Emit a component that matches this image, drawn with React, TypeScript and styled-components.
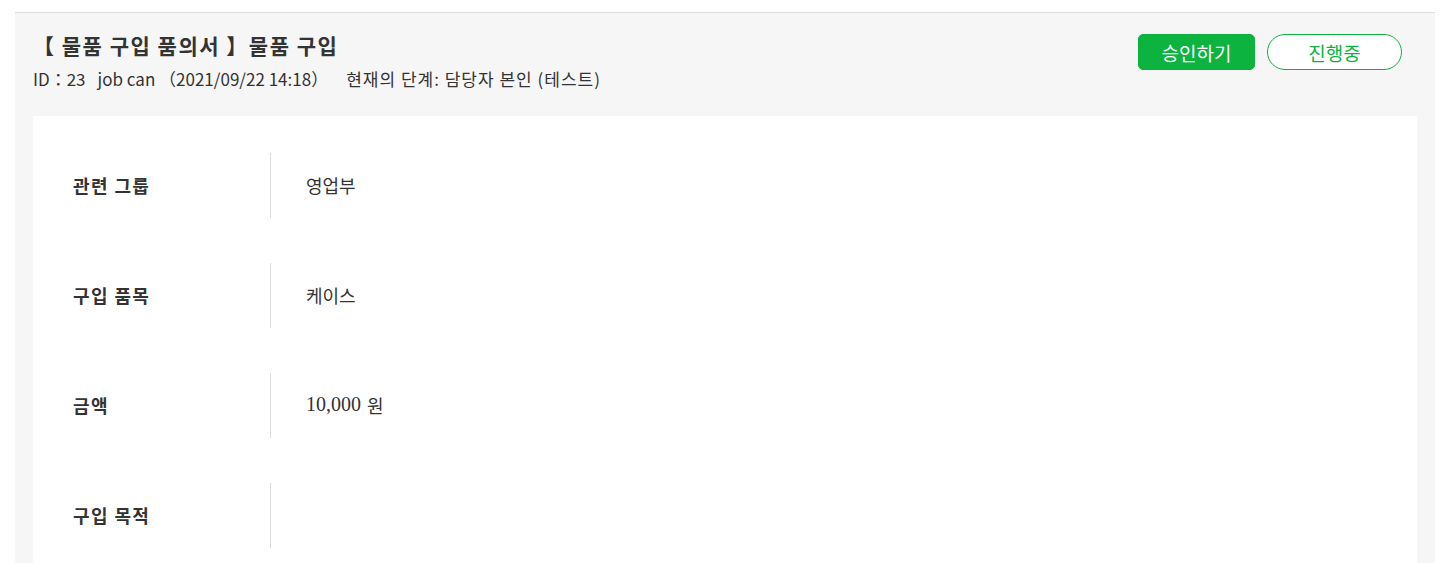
import styled, { createGlobalStyle } from 'styled-components'

const GlobalStyle = createGlobalStyle`
  body {
    margin: 0;
    background: #fff;
    font-family: 'Noto Sans CJK KR', 'Noto Sans', sans-serif;
    color: #333;
  }
`

const GREEN = '#0db33f'

const Page = styled.div`
  padding: 12px 15px 0;
`

const Sheet = styled.section`
  background: #f6f6f6;
  border-top: 1px solid #dcdcdc;
  padding: 0 18px;
`

const Header = styled.header`
  display: flex;
  justify-content: space-between;
  align-items: flex-start;
  padding: 17px 15px 25px 0;
`

const TitleBlock = styled.div`
  display: flex;
  flex-direction: column;
  gap: 7px;
`

const Title = styled.h1`
  margin: 0;
  font-size: 21px;
  line-height: 30px;
  font-weight: 700;
  letter-spacing: 1.5px;
  color: #333;
`

const Meta = styled.div`
  display: flex;
  gap: 12px;
  font-size: 17px;
  line-height: 24px;
  color: #333;
`

const Stage = styled.span`
  margin-left: 6px;
  letter-spacing: 1px;
`

const Actions = styled.div`
  display: flex;
  gap: 12px;
  margin-top: 4px;
`

const Button = styled.button<{ $variant: 'solid' | 'outline' }>`
  height: 36px;
  padding: 0;
  font-family: inherit;
  font-size: 19px;
  cursor: pointer;
  border: 1px solid ${GREEN};
  ${p =>
    p.$variant === 'solid'
      ? `
    width: 117px;
    border-radius: 5px;
    background: ${GREEN};
    color: #fff;
  `
      : `
    width: 135px;
    border-radius: 18px;
    background: #fff;
    color: ${GREEN};
  `}
`

const Card = styled.div`
  background: #fff;
  padding: 37px 0 40px;
  display: flex;
  flex-direction: column;
  gap: 45px;
`

const Row = styled.div`
  display: grid;
  grid-template-columns: 237px 1fr;
  align-items: center;
  height: 65px;
`

const Label = styled.div`
  padding-left: 40px;
  font-size: 18px;
  font-weight: 700;
  letter-spacing: 1.4px;
  margin-top: -2px;
`

const Value = styled.div`
  height: 100%;
  display: flex;
  align-items: center;
  border-left: 1px solid #dcdcdc;
  padding-left: 35px;
  padding-bottom: 2px;
  box-sizing: border-box;
  font-size: 18px;
`

const Amount = styled.span`
  font-family: 'Liberation Serif', serif;
  font-size: 20px;
  margin-right: 6px;
`

const fields: { label: string; value: React.ReactNode }[] = [
  { label: '관련 그룹', value: '영업부' },
  { label: '구입 품목', value: '케이스' },
  {
    label: '금액',
    value: (
      <>
        <Amount>10,000</Amount>원
      </>
    ),
  },
  { label: '구입 목적', value: '' },
]

export default function App() {
  return (
    <>
      <GlobalStyle />
      <Page>
        <Sheet>
          <Header>
            <TitleBlock>
              <Title>【 물품 구입 품의서 】물품 구입</Title>
              <Meta>
                <span>ID：23</span>
                <span>job can （2021/09/22 14:18）</span>
                <Stage>현재의 단계: 담당자 본인 (테스트)</Stage>
              </Meta>
            </TitleBlock>
            <Actions>
              <Button $variant="solid">승인하기</Button>
              <Button $variant="outline">진행중</Button>
            </Actions>
          </Header>
          <Card>
            {fields.map(f => (
              <Row key={f.label}>
                <Label>{f.label}</Label>
                <Value>{f.value}</Value>
              </Row>
            ))}
          </Card>
        </Sheet>
      </Page>
    </>
  )
}
